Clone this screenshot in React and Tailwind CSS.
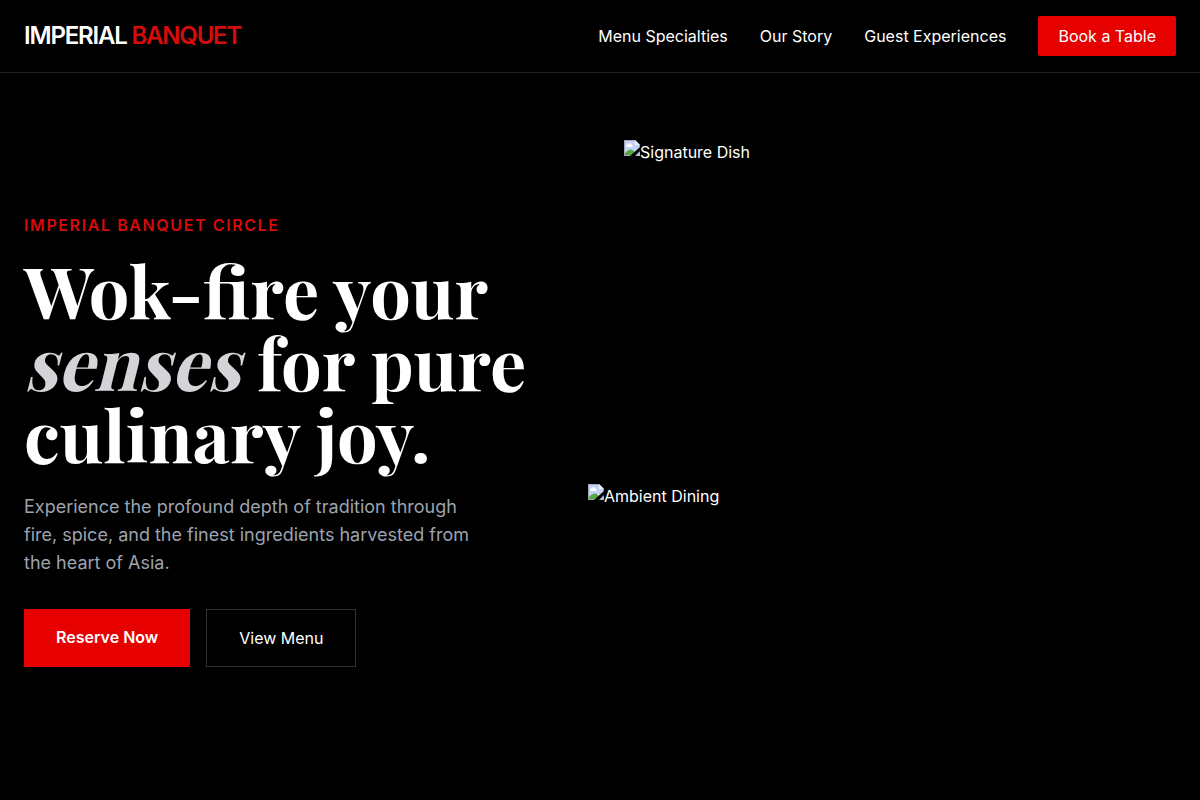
import clsx from 'clsx'

const NAV_LINKS = [
  { label: 'Menu Specialties',  href: '#menu' },
  { label: 'Our Story',         href: '#story' },
  { label: 'Guest Experiences', href: '#experiences' },
]

// ============================================================================
// Photo placeholder
// ============================================================================
function Photo({ label, className }) {
  return (
    <div role="img" aria-label={label} className={clsx('flex items-start', className)}>
      <svg width="16" height="16" viewBox="0 0 16 16" className="shrink-0" aria-hidden="true">
        <path d="M0 0h11l5 5v11H0z" fill="#a3a7ae"/>
        <path d="M1 1h10v4h4v10H1z" fill="#c3d2f5"/>
        <path d="M11 0l5 5h-5z" fill="#eef0f4"/>
        <path d="M3 7a1.5 1.5 0 0 1 .6-2.800 2 2 0 0 1 3.600.2A1.400 1.400 0 0 1 8 7z" fill="#fff"/>
        <path d="M1 15v-2c2-2 4-3.500 6-3.500s4 2.500 5 5.500z" fill="#55a944"/>
        <path d="M16 7v4l-5 5H6z" fill="#000"/>
        <path d="M16 12v4h-4z" fill="#b9bdc4"/>
      </svg>
      <span className="leading-6">{label}</span>
    </div>
  )
}

// ============================================================================
// Header
// ============================================================================
function Header() {
  return (
    <header className="fixed inset-x-0 top-0 z-10 border-b border-[#1c1c1c] bg-black">
      <div className="flex items-center justify-between px-6 py-4">
        <a href="#top" className="text-2xl font-semibold tracking-tighter">
          IMPERIAL <span className="text-[#d60b0b]">BANQUET</span>
        </a>
        <nav className="flex items-center gap-8">
          {NAV_LINKS.map(l => (
            <a key={l.href} href={l.href} className="hover:text-gray-300">{l.label}</a>
          ))}
          <a href="#book" className="rounded-xs bg-[#e60000] px-5 py-2">Book a Table</a>
        </nav>
      </div>
    </header>
  )
}

// ============================================================================
// Hero
// ============================================================================
function Hero() {
  return (
    <section id="top" className="flex min-h-screen items-center px-6 pt-20">
      <div className="grid w-full grid-cols-2 items-center gap-12">
        <div>
          <p className="mb-4 font-semibold tracking-widest text-[#d60b0b]">IMPERIAL BANQUET CIRCLE</p>
          <h1 className="mb-6 font-['Playfair_Display','Liberation_Serif',serif] text-7xl leading-none font-bold">
            Wok-fire your <br/>
            {/* slanted roman, not the cursive italic */}
            <em className="inline-block origin-[0_92%] -skew-x-[14deg] text-zinc-300 not-italic">senses</em> for pure <br/>
            culinary joy.
          </h1>
          <p className="mb-8 max-w-md text-lg text-[#9ca3af]">
            Experience the profound depth of tradition through fire, spice, and the finest
            ingredients harvested from the heart of Asia.
          </p>
          <div className="flex gap-4">
            <a href="#book" className="bg-[#e60000] px-8 py-4 font-semibold">Reserve Now</a>
            <a href="#menu" className="border border-[#333333] px-8 py-4">View Menu</a>
          </div>
        </div>

        <div className="relative">
          <Photo label="Signature Dish" className="h-[600px]"/>
          <Photo label="Ambient Dining" className="absolute bottom-0 -left-9 h-64 w-64"/>
        </div>
      </div>
    </section>
  )
}

export default function App() {
  return (
    <div className="min-h-screen bg-black font-['Inter',sans-serif] text-white">
      <Header/>
      <main>
        <Hero/>
      </main>
    </div>
  )
}
